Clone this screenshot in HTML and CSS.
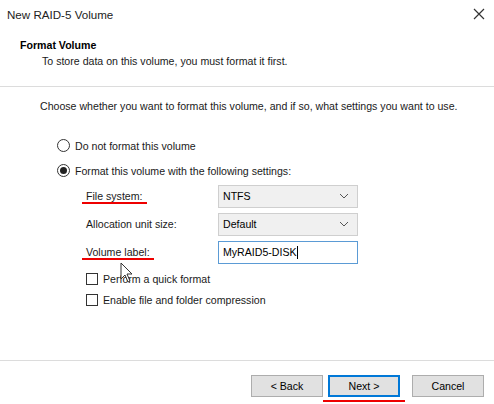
FILE: index.html
```html
<!DOCTYPE html>
<html lang="en">
  <head>
    <meta charset="UTF-8" />
    <title>New RAID-5 Volume</title>
    <link rel="stylesheet" href="styles.css">
  </head>
  <body>
    <div class="window">
      <div class="titlebar">
        <span class="title">New RAID-5 Volume</span>
        <span class="close">
          <svg width="12" height="12" viewBox="0 0 12 12">
            <path d="M1 1 L11 11 M11 1 L1 11" stroke="#333" stroke-width="1.2" fill="none" />
          </svg>
        </span>
      </div>

      <div class="header">
        <div class="heading">Format Volume</div>
        <div class="subheading">To store data on this volume, you must format it first.</div>
      </div>

      <div class="content">
        <p class="intro">Choose whether you want to format this volume, and if so, what settings you want to use.</p>

        <div class="option">
          <span class="radio"></span>
          <span>Do not format this volume</span>
        </div>
        <div class="option">
          <span class="radio checked"></span>
          <span>Format this volume with the following settings:</span>
        </div>

        <div class="settings">
          <div class="row">
            <span class="label"><span class="mark">File system:</span></span>
            <div class="select">NTFS<svg width="10" height="6" viewBox="0 0 10 6"><path d="M1 1 L5 5 L9 1" stroke="#555" fill="none" /></svg></div>
          </div>
          <div class="row">
            <span class="label">Allocation unit size:</span>
            <div class="select">Default<svg width="10" height="6" viewBox="0 0 10 6"><path d="M1 1 L5 5 L9 1" stroke="#555" fill="none" /></svg></div>
          </div>
          <div class="row">
            <span class="label"><span class="mark">Volume label:</span></span>
            <div class="textbox">MyRAID5-DISK<span class="caret"></span></div>
          </div>
          <div class="check">
            <span class="box"></span>
            <span>Perform a quick format</span>
          </div>
          <div class="check">
            <span class="box"></span>
            <span>Enable file and folder compression</span>
          </div>

          <svg class="pointer" width="14" height="22" viewBox="0 0 14 22">
            <path d="M1 1 L1 17 L5 13 L8 20 L10 19 L7 12 L12 12 Z" fill="#fff" stroke="#333" stroke-width="1" />
          </svg>
        </div>
      </div>

      <div class="footer">
        <button class="btn">&lt; Back</button>
        <span class="mark-btn"><button class="btn default">Next &gt;</button></span>
        <button class="btn cancel">Cancel</button>
      </div>
    </div>
  </body>
</html>
```

FILE: styles.css
```css
* {
  box-sizing: border-box;
}

body {
  margin: 0;
  background: #fff;
  color: #1a1a1a;
  font-family: "Liberation Sans", Arial, sans-serif;
  font-size: 10.6px;
}

.window {
  width: 494px;
  height: 404px;
  display: flex;
  flex-direction: column;
}

.titlebar {
  display: flex;
  align-items: center;
  justify-content: space-between;
  height: 30px;
  padding: 0 8px 2px 7px;
  font-size: 11.6px;
  color: #222;
}

.close {
  display: flex;
  margin-right: 1px;
}

.header {
  height: 57px;
  padding: 9px 0 0 20px;
  border-bottom: 1px solid #dcdcdc;
}

.heading {
  font-weight: bold;
  color: #000;
}

.subheading {
  margin-top: 4px;
  padding-left: 22px;
}

.content {
  flex: 1;
  padding: 13px 0 0 40px;
  border-bottom: 1px solid #dcdcdc;
}

.intro {
  margin: 0 0 27px;
}

.option {
  display: flex;
  align-items: center;
  gap: 5px;
  margin-left: 17px;
  height: 13px;
  margin-bottom: 12px;
}

.radio {
  width: 13px;
  height: 13px;
  border: 1px solid #333;
  border-radius: 50%;
  display: flex;
  align-items: center;
  justify-content: center;
}

.radio.checked::after {
  content: "";
  width: 7px;
  height: 7px;
  border-radius: 50%;
  background: #222;
}

.settings {
  position: relative;
  margin: -5px 0 0 46px;
}

.row {
  display: flex;
  align-items: center;
  height: 24px;
  margin-bottom: 4px;
}

.label {
  width: 132px;
}

.mark {
  padding: 0 4px;
  margin-left: -4px;
  border-bottom: 2px solid #e00;
}

.select {
  display: flex;
  align-items: center;
  justify-content: space-between;
  width: 140px;
  height: 23px;
  padding: 0 8px 0 4px;
  background: #f0f0f0;
  border: 1px solid #cfcfcf;
  color: #000;
}

.textbox {
  display: flex;
  align-items: center;
  width: 140px;
  height: 23px;
  padding: 0 4px;
  border: 1px solid #5b9bd5;
  color: #000;
}

.caret {
  width: 1px;
  height: 13px;
  background: #000;
}

.check {
  display: flex;
  align-items: center;
  gap: 5px;
  height: 13px;
  margin-top: 8px;
}

.box {
  width: 12px;
  height: 12px;
  border: 1px solid #333;
}

.pointer {
  position: absolute;
  left: 34px;
  top: 78px;
}

.footer {
  height: 43px;
  display: flex;
  align-items: flex-start;
  justify-content: flex-end;
  padding: 14px 10px 0 0;
}

.btn {
  width: 72px;
  height: 22px;
  padding: 0;
  background: #e1e1e1;
  border: 1px solid #adadad;
  font-family: inherit;
  font-size: 10.6px;
  font-weight: normal;
  color: #000;
}

.mark-btn {
  display: flex;
  padding: 0 5px 3px;
  margin: 0 7px 0 0;
  border-bottom: 2px solid #e00;
}

.btn.default {
  border: 2px solid #0078d7;
}
```
